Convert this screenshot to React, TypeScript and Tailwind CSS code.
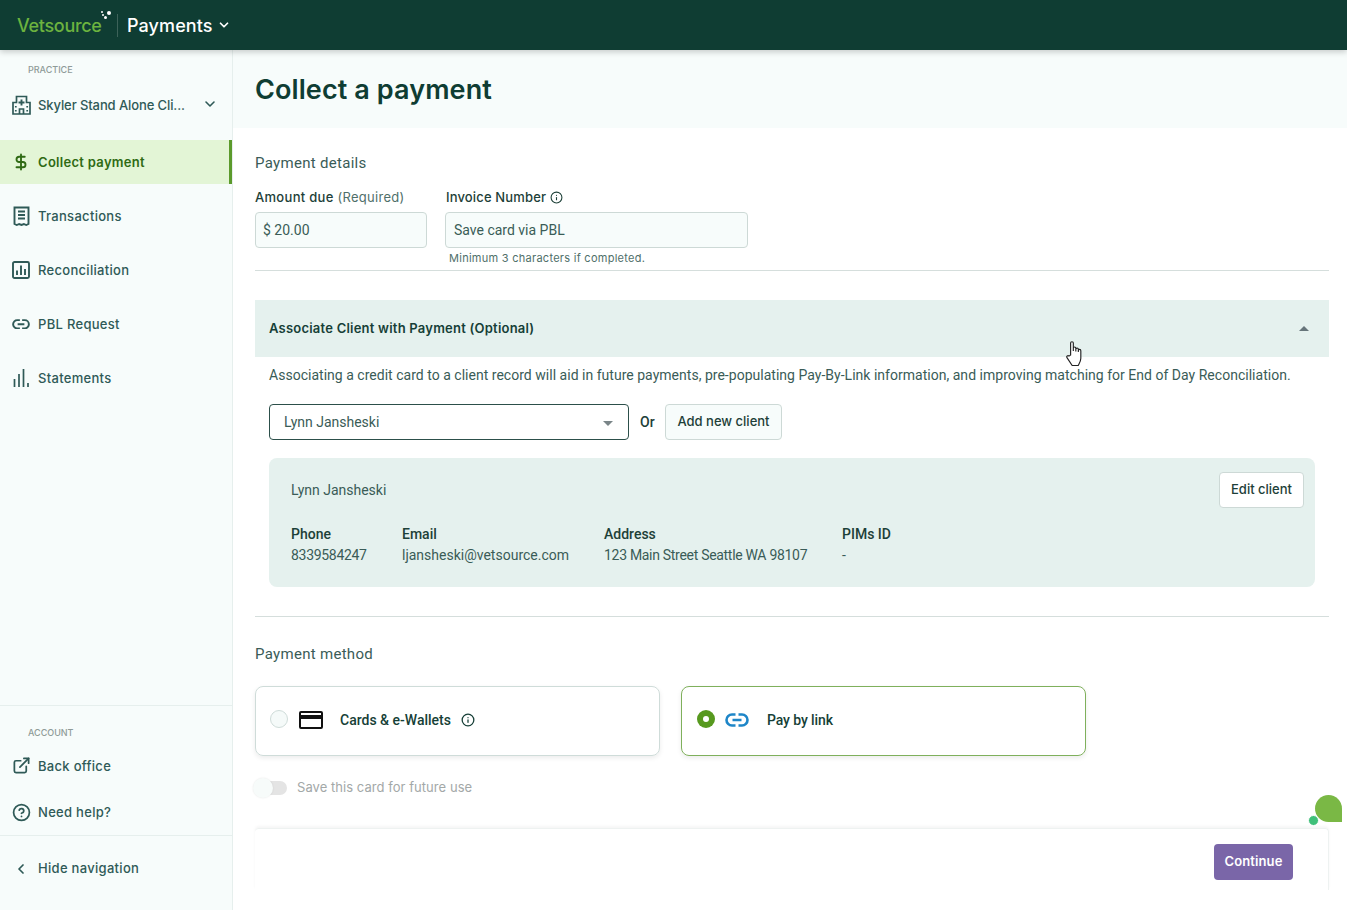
import { ChevronDown, ChevronLeft, CircleHelp, DollarSign, ExternalLink, Info } from 'lucide-react';

const heading = "font-['Inter','Noto_Sans',sans-serif]";
const body = "font-['Roboto','Liberation_Sans',sans-serif]";

const HospitalIcon = () => (
  <svg width="19" height="20" viewBox="0 0 19 20" fill="none" stroke="#2f5a57" strokeWidth="1.7">
    <path d="M1 19V7.500h3.500V1.500h10v6H18V19z" />
    <path d="M9.500 4.500v6M6.500 7.500h6" strokeWidth="1.900" />
    <path d="M7.500 19v-5h4v5M3.800 11v1.500M3.800 15v1.500M15.200 11v1.500M15.200 15v1.500" />
  </svg>
);

const ReceiptIcon = () => (
  <svg width="17" height="20" viewBox="0 0 17 20" fill="none" stroke="#2f5a57" strokeWidth="1.900">
    <path d="M1.500 18V1.500h14V18l-2.300 1-2.300-1-2.400 1-2.400-1-2.300 1z" />
    <path d="M5 5.500h7M5 9h7M5 12.500h7" />
  </svg>
);

const ReportIcon = () => (
  <svg width="18" height="18" viewBox="0 0 18 18" fill="none" stroke="#2f5a57" strokeWidth="1.900">
    <rect x="1" y="1" width="16" height="16" rx="1.500" />
    <path d="M5 9.500V14M9 4.500V14M13 8v6" />
  </svg>
);

const BarsIcon = () => (
  <svg width="16" height="20" viewBox="0 0 16 20" fill="none" stroke="#2f5a57" strokeWidth="1.700">
    <path d="M1.500 11v8M6 6v13M10.500 1v18M15 15v4" />
  </svg>
);

const LinkIcon = ({ width, color }: { width: number; color: string }) => (
  <svg width={width} viewBox="0 0 24 14" fill="none" stroke={color} strokeWidth="2.600">
    <path d="M10.500 1.500H7a5.500 5.500 0 0 0 0 11h3.500M13.500 1.500H17a5.500 5.500 0 0 1 0 11h-3.500M7.500 7h9" />
  </svg>
);

const CardIcon = () => (
  <svg width="24" height="18" viewBox="0 0 24 18">
    <path fillRule="evenodd" fill="#111" d="M2 0h20a2 2 0 0 1 2 2v14a2 2 0 0 1-2 2H2a2 2 0 0 1-2-2V2a2 2 0 0 1 2-2zM2 2v2h20V2zM2 8v8h20V8z" />
  </svg>
);

const HandCursor = () => (
  <svg width="18" height="25" viewBox="0.5 0.5 15.5 24" fill="#fff" stroke="#222" strokeWidth="1.100">
    <path d="M5 14V2.500a1.300 1.300 0 0 1 2.600 0V10V7.500a1.200 1.200 0 0 1 2.400 0V10.500V8.500a1.200 1.200 0 0 1 2.400 0V11V9.800a1.200 1.200 0 0 1 2.400 0V17c0 3-1.500 5-2.500 7H6.500L1.500 16.500c-1-1.500 1-2.500 2-1.500z" />
  </svg>
);

const NavItem = ({ icon, label, active }: { icon: React.ReactNode; label: string; active?: boolean }) => (
  <div
    className={
      active
        ? 'flex h-11 items-center border-r-[3px] border-[#5b9a2c] bg-[#e3f5d6] pl-3 text-[13px] font-semibold tracking-[0.3px] text-[#2f6a14]'
        : 'flex h-[54px] items-center pl-3 text-[13px] font-medium tracking-[0.3px] text-[#2f5a57]'
    }
  >
    <span className="flex w-[18px] justify-center">{icon}</span>
    <span className="mt-[2px] ml-2">{label}</span>
  </div>
);

const Detail = ({ label, value, width, tight }: { label: string; value: string; width: string; tight?: boolean }) => (
  <div className={width}>
    <div className="text-[14px] leading-[21px] font-medium text-[#1d4038]">{label}</div>
    <div className={tight ? 'text-[14px] leading-[21px] tracking-[-0.3px] text-[#3a5c57]' : 'text-[14px] leading-[21px] text-[#3a5c57]'}>{value}</div>
  </div>
);

const App = () => {
  return (
    <div className={`relative flex h-[910px] w-[1347px] flex-col overflow-hidden bg-white ${heading}`}>
      <header className="z-10 flex h-[50px] shrink-0 items-center bg-[#0f3d33] pl-[17px] shadow-[0_2px_6px_rgba(0,0,0,0.2)]">
        <div className="relative w-[85px] pt-px text-[18px] leading-none font-medium tracking-[-0.3px] text-[#6cb33f]">
          Vetsource
          <span className="absolute top-[-5px] right-[-1px] h-[2px] w-[2px] rounded-full bg-white" />
          <span className="absolute top-[-2px] right-[-2px] h-[2px] w-[2px] rounded-full bg-white" />
          <span className="absolute top-[-5px] right-[-9px] h-[4px] w-[4px] rounded-full bg-white" />
          <span className="absolute top-0 right-[-5px] h-[3px] w-[3px] rounded-full bg-white" />
        </div>
        <div className="ml-[15px] h-[23px] w-px bg-[#3d6259]" />
        <div className="ml-[9px] pt-px text-[18px] font-medium tracking-[0.1px] text-white">Payments</div>
        <ChevronDown size={14} strokeWidth={3} className="ml-1 text-white" />
      </header>

      <div className="flex min-h-0 flex-1">
        <aside className="flex w-[233px] shrink-0 flex-col border-r border-[#e6efed] bg-[#f7fcfb]">
          <div className="pt-[14px] pl-7 text-[9px] leading-[11px] font-medium text-[#8f9b98]">PRACTICE</div>
          <div className="flex h-[60px] shrink-0 items-center pl-3 text-[13px] font-medium tracking-[-0.1px] text-[#2f5a57]">
            <HospitalIcon />
            <span className="mt-[2px] ml-[7px] w-[151px]">Skyler Stand Alone Cli...</span>
            <ChevronDown size={16} strokeWidth={2.4} className="mb-[2px] ml-[13px]" />
          </div>
          <div className="mt-[5px]">
            <NavItem active icon={<DollarSign size={22} strokeWidth={2.5} />} label="Collect payment" />
          </div>
          <div className="mt-[5px]">
            <NavItem icon={<ReceiptIcon />} label="Transactions" />
            <NavItem icon={<ReportIcon />} label="Reconciliation" />
            <NavItem icon={<LinkIcon width={19} color="#2f5a57" />} label="PBL Request" />
            <NavItem icon={<BarsIcon />} label="Statements" />
          </div>
          <div className="mt-auto border-t border-[#e6efed]">
            <div className="pt-[21px] pl-7 text-[9px] leading-[11px] font-medium text-[#8f9b98]">ACCOUNT</div>
            <div className="mt-1 flex h-[47px] items-center pl-3 text-[13px] font-medium tracking-[0.3px] text-[#2f5a57]">
              <ExternalLink size={19} strokeWidth={2.2} />
              <span className="mt-[2px] ml-[7px]">Back office</span>
            </div>
            <div className="flex h-[46px] items-center pl-3 text-[13px] font-medium tracking-[0.3px] text-[#2f5a57]">
              <CircleHelp size={19} strokeWidth={2.2} />
              <span className="mt-[2px] ml-[7px]">Need help?</span>
            </div>
          </div>
          <div className="flex h-[75px] shrink-0 items-start border-t border-[#e6efed] pt-[23px] pl-3 text-[13px] font-medium tracking-[0.3px] text-[#2f5a57]">
            <ChevronLeft size={16} strokeWidth={2.6} className="mt-[2px] ml-px" />
            <span className="ml-[9px]">Hide navigation</span>
          </div>
        </aside>

        <main className="flex min-w-0 flex-1 flex-col">
          <div className="flex h-[78px] shrink-0 items-center bg-[#f7fcfb] pt-[2px] pl-[22px]">
            <h1 className="text-[27px] font-semibold tracking-[0.1px] text-[#0f3d33]">Collect a payment</h1>
          </div>

          <div className="min-h-0 flex-1 pr-[18px] pl-[22px]">
            <h2 className={`pt-[25px] text-[15px] leading-[21px] tracking-[0.3px] text-[#3a5c57] ${body}`}>Payment details</h2>
            <div className="mt-[14px] flex gap-[18px]">
              <div className="w-[172px]">
                <div className="text-[13px] leading-[18px] font-medium tracking-[0.3px] text-[#1d4038]">
                  Amount due <span className="font-normal text-[#4f6f6a]">(Required)</span>
                </div>
                <div className={`mt-[6px] flex h-9 items-center rounded border border-[#cdd9d6] bg-[#f7fcfb] pl-[7px] text-[14px] text-[#3a5c57] ${body}`}>$ 20.00</div>
              </div>
              <div className="w-[303px]">
                <div className="flex items-center pl-px text-[13px] leading-[18px] font-medium tracking-[0.15px] text-[#1d4038]">
                  Invoice Number
                  <Info size={13} strokeWidth={2} className="ml-[4px]" />
                </div>
                <div className={`mt-[6px] flex h-9 items-center rounded border border-[#cdd9d6] bg-[#f7fcfb] pl-2 text-[14px] text-[#3a5c57] ${body}`}>Save card via PBL</div>
                <div className="mt-[3px] pl-1 text-[11px] leading-[14px] tracking-[0.27px] text-[#4f6f6a]">Minimum 3 characters if completed.</div>
              </div>
            </div>
            <div className="mt-[5px] border-t border-[#d5dedc]" />

            <div className="mt-[29px] flex h-[57px] items-center justify-between bg-[#e5f1ee] pr-[20px] pl-[14px]">
              <span className="text-[13px] font-semibold tracking-[0.22px] text-[#163f37]">Associate Client with Payment (Optional)</span>
              <span className="h-0 w-0 border-x-[5px] border-b-[5px] border-x-transparent border-b-[#66757a]" />
            </div>
            <div className="px-[14px]">
              <p className={`pt-[8px] text-[14px] leading-[20px] tracking-[0.02px] text-[#3a5c57] ${body}`}>
                Associating a credit card to a client record will aid in future payments, pre-populating Pay-By-Link information, and improving matching for End of Day Reconciliation.
              </p>
              <div className="mt-[19px] flex items-center">
                <div className={`flex h-9 w-[360px] items-center justify-between rounded border border-[#2c4f4a] pr-[15px] pl-[14px] text-[14px] text-[#3a5c57] ${body}`}>
                  Lynn Jansheski
                  <span className="mt-[3px] h-0 w-0 border-x-[5px] border-t-[5px] border-x-transparent border-t-[#7a8588]" />
                </div>
                <span className={`ml-[11px] w-[15px] text-[14px] font-medium text-[#1d4038] ${body}`}>Or</span>
                <div className="ml-[10px] flex h-9 w-[117px] items-center justify-center rounded border border-[#cdd9d6] bg-[#f7fcfb] text-[13px] font-medium text-[#1d4038]">Add new client</div>
              </div>
              <div className={`mt-[18px] flex h-[129px] justify-between rounded-lg bg-[#e5f1ee] pt-[14px] pr-[11px] pl-[22px] ${body}`}>
                <div>
                  <div className="pt-2 text-[14px] leading-[21px] text-[#3a5c57]">Lynn Jansheski</div>
                  <div className="mt-[23px] flex">
                    <Detail tight width="w-[111px]" label="Phone" value="8339584247" />
                    <Detail width="w-[202px]" label="Email" value="ljansheski@vetsource.com" />
                    <Detail tight width="w-[238px]" label="Address" value="123 Main Street Seattle WA 98107" />
                    <Detail width="w-[60px]" label="PIMs ID" value="-" />
                  </div>
                </div>
                <div className={`flex h-9 w-[85px] items-center justify-center rounded border border-[#cdd9d6] bg-white text-[13px] font-medium text-[#1d4038] ${heading}`}>Edit client</div>
              </div>
            </div>
            <div className="mt-[29px] border-t border-[#d5dedc]" />

            <h2 className={`pt-[27px] text-[15px] leading-[21px] tracking-[0.3px] text-[#3a5c57] ${body}`}>Payment method</h2>
            <div className={`mt-[21px] flex gap-[21px] ${body}`}>
              <div className="flex h-[70px] w-[405px] items-center rounded-lg border border-[#cfdcd9] pb-[2px] pl-[14px] shadow-[0_2px_5px_rgba(0,0,0,0.08)]">
                <span className="mb-[2px] h-[18px] w-[18px] rounded-full border border-[#cfdcd9] bg-[#f5faf9]" />
                <span className="ml-[11px]"><CardIcon /></span>
                <span className="ml-[17px] w-[113px] text-[14px] font-medium text-[#163f37]">Cards &amp; e-Wallets</span>
                <Info size={14} strokeWidth={2.2} className="ml-2 text-[#163f37]" />
              </div>
              <div className="flex h-[70px] w-[405px] items-center rounded-lg border border-[#7fb05c] pb-[2px] pl-[15px] shadow-[0_2px_5px_rgba(0,0,0,0.08)]">
                <span className="mb-[2px] flex h-[18px] w-[18px] items-center justify-center rounded-full bg-[#57991f]">
                  <span className="h-[6px] w-[6px] rounded-full bg-white" />
                </span>
                <span className="ml-[10px] flex"><LinkIcon width={24} color="#1e86c8" /></span>
                <span className="ml-[18px] text-[14px] font-medium tracking-[-0.1px] text-[#163f37]">Pay by link</span>
              </div>
            </div>
            <div className="mt-[22px] flex h-5 items-center">
              <div className="relative h-[14px] w-[32px] rounded-full bg-[#e4e4e4]">
                <span className="absolute top-[-3px] left-[-2px] h-5 w-5 rounded-full bg-[#f7fbfa] shadow-[0_0_2px_rgba(0,0,0,0.1)]" />
              </div>
              <span className="ml-[10px] text-[13px] tracking-[0.05px] text-[#a3a8a8]">Save this card for future use</span>
            </div>
          </div>

          <div className="mr-[18px] mb-5 ml-[22px] flex h-[62px] shrink-0 items-start justify-end rounded-t border-t border-r border-[#eef2f1] pt-[15px] pr-[35px] shadow-[0_-2px_3px_rgba(0,0,0,0.04)]">
            <div className="flex h-9 w-[79px] items-center justify-center rounded bg-[#7a66a8] text-[13px] font-semibold tracking-[0.1px] text-white">Continue</div>
          </div>
        </main>
      </div>

      <div className="absolute top-[795px] right-[5px] h-[27px] w-[27px] rounded-t-full rounded-bl-full bg-[#7ab845]" />
      <div className="absolute top-[815px] right-[28px] h-[11px] w-[11px] rounded-full border border-white bg-[#3fc07a]" />
      <div className="absolute top-[341px] left-[1065px]">
        <HandCursor />
      </div>
    </div>
  );
};

export default App;
